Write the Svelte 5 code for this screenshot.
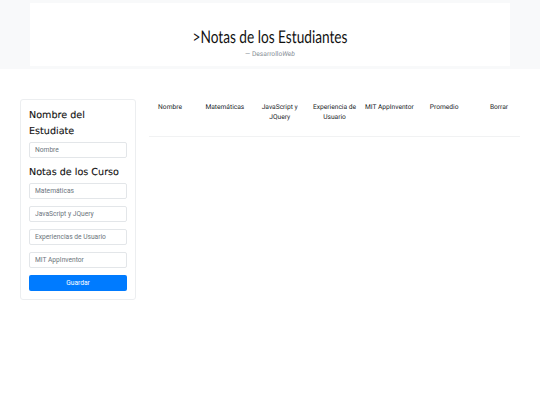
<script>
    const columns = [
        'Nombre',
        'Matemáticas',
        'JavaScript y JQuery',
        'Experiencia de Usuario',
        'MIT AppInventor',
        'Promedio',
        'Borrar'
    ];
    const courses = ['Matemáticas', 'JavaScript y JQuery', 'Experiencias de Usuario', 'MIT AppInventor'];
</script>

<header class="banner">
    <div class="jumbo">
        <h1>&gt;Notas de los Estudiantes</h1>
        <p>— Desarrollo<em>Web</em></p>
    </div>
</header>

<main class="content">
    <form class="card">
        <h2>Nombre del Estudiate</h2>
        <input type="text" placeholder="Nombre" />
        <h2 class="second">Notas de los Curso</h2>
        <div class="fields">
            {#each courses as course}
                <input type="text" placeholder={course} />
            {/each}
            <button type="button">Guardar</button>
        </div>
    </form>

    <section class="table">
        <div class="head">
            {#each columns as col}
                <div class="cell">{col}</div>
            {/each}
        </div>
    </section>
</main>

<style>
    :global(body) {
        margin: 0;
        background: #fff;
        font-family: Roboto, "Liberation Sans", sans-serif;
        color: #212529;
        text-rendering: geometricPrecision;
    }

    .banner {
        background: #f8f9fa;
        padding: 3px 30px;
        height: 63px;
    }

    .jumbo {
        background: #fff;
        height: 63px;
        box-sizing: border-box;
        padding-top: 24px;
        text-align: center;
    }

    h1 {
        margin: 0;
        font-family: Lato, "DejaVu Sans Condensed", sans-serif;
        font-size: 17.5px;
        line-height: 20px;
        font-weight: 400;
        transform: scaleX(0.78);
        color: #111;
    }

    .jumbo p {
        margin: 3px 0 0;
        font-size: 6.67px;
        line-height: 9px;
        color: #868e96;
    }

    .content {
        display: flex;
        align-items: flex-start;
        padding: 30px 20px 0;
        gap: 13px;
    }

    .card {
        width: 116px;
        height: 200.5px;
        box-sizing: border-box;
        border: 1px solid #eceef0;
        border-radius: 3px;
        padding: 8px;
        flex: none;
    }

    h2 {
        margin: 0 0 2px;
        font-family: "DejaVu Sans", sans-serif;
        font-size: 9.6px;
        line-height: 16px;
        font-weight: 400;
        color: #111;
        -webkit-text-stroke: 0.1px #111;
    }

    h2.second {
        margin-top: 7px;
        margin-bottom: 1.7px;
    }

    input {
        display: block;
        width: 100%;
        height: 16.3px;
        box-sizing: border-box;
        border: 1px solid #e3e6e9;
        border-radius: 2px;
        padding: 0 5px;
        font-family: inherit;
        font-size: 6.67px;
        background: #fff;
        color: #495057;
    }

    input::placeholder {
        color: #6c757d;
        opacity: 1;
    }

    .fields {
        display: flex;
        flex-direction: column;
        gap: 6.7px;
    }

    button {
        height: 16.3px;
        border: 0;
        border-radius: 2px;
        background: #007bff;
        color: #fff;
        font-family: inherit;
        font-size: 6.67px;
        padding: 0;
    }

    .table {
        flex: 1;
        min-width: 0;
    }

    .head {
        display: grid;
        grid-template-columns: repeat(7, 54.83px);
        justify-content: center;
        height: 35px;
        padding-top: 1.5px;
        border-bottom: 1px solid #f1f2f3;
    }

    .cell {
        padding: 1px 2px 0;
        text-align: center;
        font-size: 6.67px;
        line-height: 10px;
        color: #212529;
    }
</style>
